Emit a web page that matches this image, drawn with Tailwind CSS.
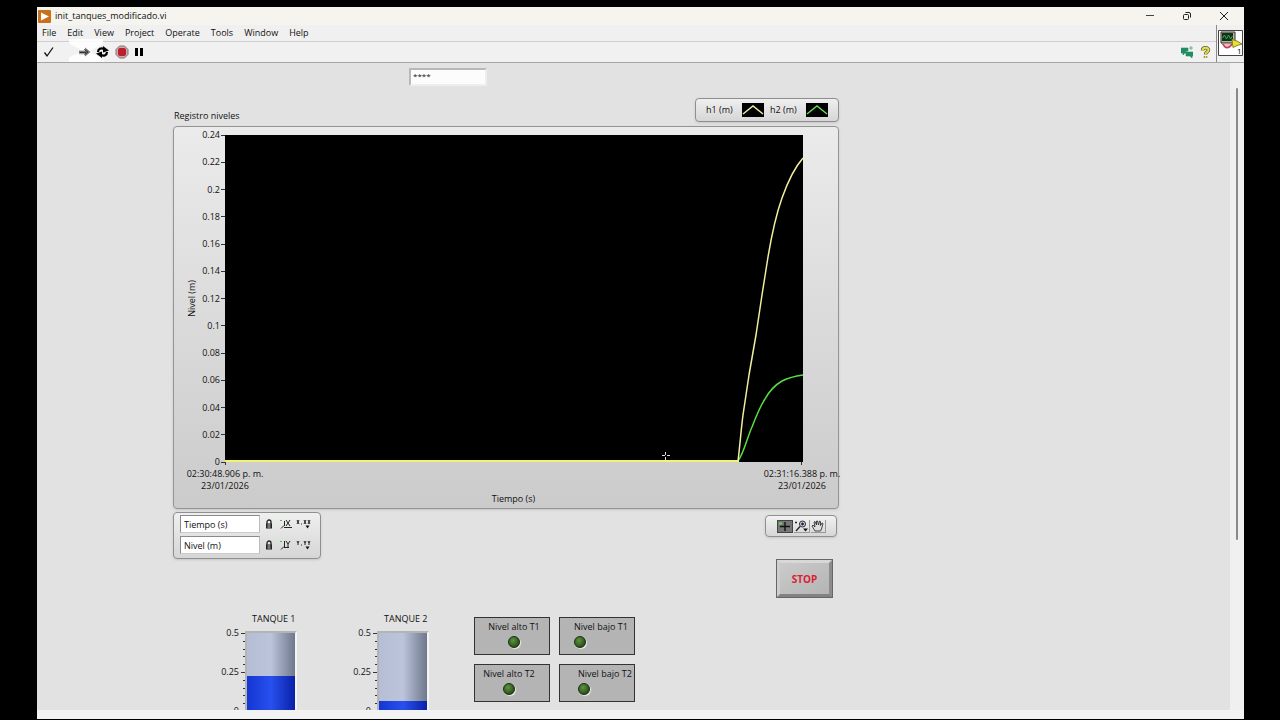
<!DOCTYPE html>
<html lang="es">
<head>
  <meta charset="UTF-8" />
  <meta name="viewport" content="width=device-width, initial-scale=1.0"/>
  <title>init_tanques_modificado.vi</title>
  <script src="https://cdn.jsdelivr.net/npm/@tailwindcss/browser@4"></script>
</head>
<body class="bg-black h-screen pt-[7px] pb-px pl-[37px] pr-9 font-['Open_Sans',sans-serif] text-[9px] leading-3 text-[#111]">
  <div class="h-full flex flex-col bg-[#f0f0f0] overflow-hidden">

    <!-- title bar -->
    <header class="h-[18px] shrink-0 flex items-center bg-[#f5f4ef] pl-px">
      <svg class="size-[13px]" viewBox="0 0 13 13"><rect width="13" height="13" rx="1" fill="#c9701c"/><path d="M3 2.5 11 6.5 3 10.5Z" fill="#fff"/></svg>
      <h1 class="ml-1 flex-1">init_tanques_modificado.vi</h1>
      <div class="flex items-center gap-[25px] mr-[14px]">
        <button aria-label="Minimize"><svg class="size-3" viewBox="0 0 12 12"><path d="M2 5.5h8" stroke="#444" fill="none"/></svg></button>
        <button aria-label="Restore"><svg class="size-3" viewBox="0 0 12 12"><path d="M4.500 2.500h3.500a1.500 1.500 0 0 1 1.500 1.500v3.500M3.500 4.500h3a1 1 0 0 1 1 1v3a1 1 0 0 1-1 1h-3a1 1 0 0 1-1-1v-3a1 1 0 0 1 1-1Z" stroke="#222" fill="none"/></svg></button>
        <button aria-label="Close"><svg class="size-3" viewBox="0 0 12 12"><path d="m2 2 8 8M10 2 2 10" stroke="#222" fill="none"/></svg></button>
      </div>
    </header>

    <!-- menu and toolbar -->
    <div class="shrink-0 flex border-b border-[#a4a6a6]">
      <div class="flex-1">
        <nav class="h-[17px] flex items-center gap-[11px] pl-[5px] border-b border-[#cfcfcf]">
          <button>File</button>
          <button>Edit</button>
          <button>View</button>
          <button>Project</button>
          <button>Operate</button>
          <button>Tools</button>
          <button>Window</button>
          <button>Help</button>
        </nav>
        <div class="relative h-5 flex items-center bg-[#f1f1f1] pl-[6px] pr-[5px]">
          <button aria-label="Check"><svg class="size-3" viewBox="0 0 12 12"><path d="m1.500 6.500 2.500 3.500L10 1.500" stroke="#111" stroke-width="1.300" fill="none"/></svg></button>
          <svg class="absolute left-[30px] -top-[4px] w-10 h-[25px]" viewBox="0 0 40 25"><path d="M2 1h34v4c-4 5-12 5-12 8s8 4 14 11H2v-4c3-4 12-4 12-7S6 9 2 5Z" fill="#fff" opacity=".85"/></svg>
          <button aria-label="Run" class="relative ml-[23px]"><svg class="w-[13px] h-3" viewBox="0 0 13 12"><path d="M1 4h6V1.500L12.500 6 7 10.500V8H1Z" fill="#777"/><path d="M6 3.500 10 6 6 9M2 6.500h6" stroke="#333" fill="none"/><path d="M1 4.500h6M1 8h6" stroke="#ccc"/></svg></button>
          <button aria-label="Run continuously" class="relative ml-[5px]"><svg class="w-[13px] h-3" viewBox="0 0 13 12"><path d="M2 6C2 3 5 1.500 8 3M11 6c0 3-3 4.500-6 3" stroke="#000" stroke-width="2.200" fill="none"/><path d="M7 0 13 4.500 7 6.500ZM6 12 0 7.500 6 5.500Z" fill="#000"/></svg></button>
          <button aria-label="Abort" class="ml-[6px]"><svg class="size-[14px]" viewBox="0 0 14 14"><path d="M4.500 1h5L13 4.500v5L9.500 13h-5L1 9.500v-5Z" fill="#d8a8a8" stroke="#777"/><rect x="3" y="3" width="8" height="8" rx="2" fill="#b9202e"/></svg></button>
          <button aria-label="Pause" class="ml-[4px]"><svg class="size-3" viewBox="0 0 12 12"><path d="M2 2h3v8H2zM7 2h3v8H7z" fill="#000"/></svg></button>
          <span class="flex-1"></span>
          <button aria-label="Collaborate"><svg class="size-3" viewBox="0 0 12 12"><path d="M0 2h7v3H5v2H4L2 9V7H0ZM5 6h7v4h-1v2L9 10H5ZM10 0v4M8 2h4" fill="#1f8f63" stroke="#1f8f63" stroke-width=".6"/></svg></button>
          <button aria-label="Context help" class="ml-[7px]"><svg class="w-[11px] h-[13px]" viewBox="0 0 11 13"><path d="M2.500 4.500C2.500 1 8.500 1 8.500 4c0 2-3 2-3 4.500M5.500 10v2" stroke="#555" stroke-width="3.400" fill="none"/><path d="M2.500 4.500C2.500 1 8.500 1 8.500 4c0 2-3 2-3 4.500M5.500 10v2" stroke="#ece52c" stroke-width="2" fill="none"/></svg></button>
        </div>
      </div>
      <div class="w-7 border-l border-[#8a8a8a] pt-[5px] pl-px">
        <svg class="w-[25px] h-[26px]" viewBox="0 0 25 26"><path d="M.5.500h24v25H.5Z" fill="#fff" stroke="#444"/><path d="M3 2h14v11H3Z" fill="#bdb5a0" stroke="#333"/><path d="M4 3h11v8H4Z" fill="#12301a"/><path d="M4.500 8l2-3 2 4 2-4 2 4 2-3" stroke="#2fae4a" fill="none"/><path d="M3 13h12l-2 2H5Z" fill="#b9a98a" stroke="#555" stroke-width=".5"/><path d="M5 14c2 5 6 5 9 0" stroke="#c0405a" stroke-width="1.500" fill="#f3b7c3"/><path d="M14 9.500 19 11l5 3-5 1.500-4 2Z" fill="#e9df38" stroke="#8b8420"/><text x="19" y="24" font-size="8" fill="#000">1</text></svg>
      </div>
    </div>

    <!-- front panel -->
    <div class="flex-1 min-h-0 flex">
      <main class="flex-1 overflow-hidden bg-[#e2e2e2]">
        <input type="text" aria-label="Clave" value="****" class="block mt-[5px] ml-[372px] w-[78px] h-[18px] bg-[#fcfcfc] border-2 border-t-[#b8b8b8] border-l-[#b8b8b8] border-r-[#eee] border-b-[#eee] pl-0.5 pb-1 text-[8px]">

        <section class="ml-[136px] mt-3 w-[666px]">
          <div class="flex justify-between items-end">
            <h2 class="pl-px">Registro niveles</h2>
            <div class="flex items-center h-6 w-[144px] pl-[10px] rounded border border-[#8f8f8f] bg-linear-to-b from-[#efefef] to-[#d6d6d6] shadow">
              <span class="w-9">h1 (m)</span>
              <svg class="w-[22px] h-[14px] bg-black" viewBox="0 0 22 14"><path d="M1 11 11 3l10 8" stroke="#f0eea0" stroke-width="1.500" fill="none"/></svg>
              <span class="w-9 ml-[6px]">h2 (m)</span>
              <svg class="w-[22px] h-[14px] bg-black" viewBox="0 0 22 14"><path d="M1 11 11 3l10 8" stroke="#5fe04c" stroke-width="1.500" fill="none"/></svg>
            </div>
          </div>

          <!-- chart -->
          <div class="mt-1 h-[383px] rounded border border-[#949494] bg-linear-to-b from-[#ebebeb] to-[#cbcbcb] pt-2 shadow">
            <div class="flex h-[327px]">
              <div class="w-6 flex items-center justify-end"><span class="[writing-mode:vertical-rl] rotate-180">Nivel (m)</span></div>
              <div id="ticks" class="w-[27px] -my-[6px] flex flex-col justify-between"></div>
              <svg class="w-[578px] h-[327px] bg-black" viewBox="0 0 578 327">
                <path d="M513 326C519 318 522 303 527 292C532 279 536 270 540 264C545 255 550 250 557 246C563 243 571 241 578 240" stroke="#55e040" stroke-width="1.500" fill="none"/>
                <path d="M513 326C515 310 516 295 518 280L524 240L531 200L537 160L543 122C547 98 551 80 557 63C563 46 570 32 578 23" stroke="#efeea0" stroke-width="1.500" fill="none" stroke-linejoin="round"/>
                <path d="M0 326H514" stroke="#f4f26a" stroke-width="2"/>
                <path d="M440.500 317v3M440.500 322v3M437 320.500h3M442 320.500h3" stroke="#ddd" fill="none"/>
              </svg>
            </div>
            <div class="flex justify-between pl-[11px] text-center">
              <div class="w-20"><div class="mx-auto w-px h-[3px] bg-[#333]"></div><p class="pt-[3px] whitespace-nowrap">02:30:48.906 p. m.<br>23/01/2026</p></div>
              <p class="self-end -mb-[13px]">Tiempo (s)</p>
              <div class="w-20 -mr-1"><div class="mx-auto w-px h-[3px] bg-[#333]"></div><p class="pt-[3px] whitespace-nowrap">02:31:16.388 p. m.<br>23/01/2026</p></div>
            </div>
          </div>

          <div class="flex justify-between mt-[3px]">
            <!-- scale legend -->
            <div class="h-[47px] w-[148px] flex flex-col gap-[3px] rounded border border-[#8f8f8f] bg-linear-to-b from-[#efefef] to-[#d6d6d6] pt-[2px] pl-[6px] shadow">
              <div class="flex items-center">
                <input aria-label="Escala X" value="Tiempo (s)" class="w-20 h-[18px] pl-[3px] bg-white border border-[#8a8a8a] border-b-[#ccc] border-r-[#bbb]">
                <button aria-label="Bloquear X" class="ml-1"><svg class="size-[10px]" viewBox="0 0 10 10"><path d="M3 5V3a2 2 0 0 1 4 0v2" stroke="#222" stroke-width="1.300" fill="none"/><path d="M2 4.500h6V9.500H2Z" fill="#222"/><path d="M3.500 6h3M3.500 8h3" stroke="#ccc"/></svg></button>
                <button aria-label="Autoescala X" class="ml-[6px]"><svg class="w-3 h-[10px]" viewBox="0 0 12 10"><path d="M0 1.500h2" stroke="#45c83c"/><path d="M4.500 2v5M1 9.500l3-3M4 8.500h8M6 1l4 6M10 1 6 7" stroke="#222" fill="none"/></svg></button>
                <button aria-label="Formato X" class="ml-[4px]"><svg class="w-4 h-[10px]" viewBox="0 0 16 10"><path d="M1 1l2 4M3 1 1 5M5 5h1M8 1l2 4M10 1 8 5M12 1l2 4M14 1l-2 4" stroke="#222" fill="none"/><path d="M9.500 6.500h4l-2 3Z" fill="#111"/></svg></button>
              </div>
              <div class="flex items-center">
                <input aria-label="Escala Y" value="Nivel (m)" class="w-20 h-[18px] pl-[3px] bg-white border border-[#8a8a8a] border-b-[#ccc] border-r-[#bbb]">
                <button aria-label="Bloquear Y" class="ml-1"><svg class="size-[10px]" viewBox="0 0 10 10"><path d="M3 5V3a2 2 0 0 1 4 0v2" stroke="#222" stroke-width="1.300" fill="none"/><path d="M2 4.500h6V9.500H2Z" fill="#222"/><path d="M3.500 6h3M3.500 8h3" stroke="#ccc"/></svg></button>
                <button aria-label="Autoescala Y" class="ml-[6px]"><svg class="w-3 h-[10px]" viewBox="0 0 12 10"><path d="M0 1.500h2" stroke="#45c83c"/><path d="M4.500 1v6M1 9.500l3-3M4 7.500h5M6 1l2 3M10 1 8 4v4" stroke="#222" fill="none"/></svg></button>
                <button aria-label="Formato Y" class="ml-[4px]"><svg class="w-4 h-[10px]" viewBox="0 0 16 10"><path d="M1 1l1 2 1-2M2 3v2M5 5h1M8 1l1 2 1-2M9 3v2M12 1l1 2 1-2M13 3v2" stroke="#222" fill="none"/><path d="M9.500 6.500h4l-2 3Z" fill="#111"/></svg></button>
              </div>
            </div>

            <!-- graph palette and stop -->
            <div class="pt-[3px] pr-[2px] flex flex-col items-end">
              <div class="flex items-center gap-px h-[22px] w-[72px] pl-[11px] rounded border border-[#8f8f8f] bg-linear-to-b from-[#f2f2f2] to-[#d6d6d6] shadow">
                <button aria-label="Cursor" class="bg-[#777] border border-[#444]"><svg class="w-[14px] h-[11px]" viewBox="0 0 14 11"><path d="M7 1v9M2 5.500h10" stroke="#111" stroke-width="1.400"/><path d="M1 2.500h3" stroke="#5fe04c" stroke-width="2"/></svg></button>
                <button aria-label="Zoom" class="border-r border-b border-[#999]"><svg class="w-[15px] h-3" viewBox="0 0 15 12"><circle cx="8.500" cy="4" r="3" fill="#dde" stroke="#223"/><path d="M6 6.500 2 11M7 4h3M8.500 2.500v3M1 2.500h2" stroke="#223" stroke-width="1.300"/><path d="M9 8.500h5l-2.500 3Z" fill="#111"/></svg></button>
                <button aria-label="Mover" class="border-r border-b border-[#999]"><svg class="w-[14px] h-3" viewBox="0 0 14 12"><path d="M4 11 1 6l1-1 2 2L3 2l1-.5L5.500 5 5.500 1h1L7.500 5 8.500 1l1 .5L9.500 5.500 11 3l1 .5L10.500 9 9.500 11Z" fill="#ddd" stroke="#222" stroke-width=".8"/></svg></button>
              </div>
              <button class="mt-[22px] mr-1 w-[57px] h-[39px] border border-[#666] bg-[#bebebe] text-[10px] text-[#dc1c34] font-bold"><span class="flex h-full items-center justify-center border-3 border-t-[#d8d8d8] border-l-[#cecece] border-r-[#8c8c8c] border-b-[#828282] bg-linear-to-br from-[#cbcbcb] to-[#b4b4b4]">STOP</span></button>
            </div>
          </div>
        </section>

        <!-- tanks and alarms -->
        <section class="ml-[180px] mt-[15px] flex items-start">
          <div class="w-[132px]">
            <h3 class="pl-[35px] h-[18px]">TANQUE 1</h3>
            <div class="flex">
              <div class="w-[22px] h-[90px] -mt-[4px] flex flex-col justify-between text-right">
                <span>0.5</span><span>0.25</span><span>0</span>
              </div>
              <svg class="w-[6px] h-[82px] shrink-0" viewBox="0 0 6 82"><path d="M2 2.500h4M4 10.500h2M4 18.500h2M4 25.500h2M4 33.500h2M2 41.500h4M4 49.500h2M4 57.500h2M4 64.500h2M4 72.500h2" stroke="#333"/></svg>
              <div class="w-[52px] h-[90px] border-2 border-[#b4b4b4] border-r-[#f4f4f4] flex flex-col justify-end bg-linear-to-r from-[#b6bed6] via-[#bcc4dc] via-50% to-[#6f788c]">
                <div class="h-[43px] bg-linear-to-r from-[#1436d2] via-[#2850ee] via-50% to-[#0a20a8]"></div>
              </div>
            </div>
          </div>
          <div class="w-[125px]">
            <h3 class="pl-[35px] h-[18px]">TANQUE 2</h3>
            <div class="flex">
              <div class="w-[22px] h-[90px] -mt-[4px] flex flex-col justify-between text-right">
                <span>0.5</span><span>0.25</span><span>0</span>
              </div>
              <svg class="w-[6px] h-[82px] shrink-0" viewBox="0 0 6 82"><path d="M2 2.500h4M4 10.500h2M4 18.500h2M4 25.500h2M4 33.500h2M2 41.500h4M4 49.500h2M4 57.500h2M4 64.500h2M4 72.500h2" stroke="#333"/></svg>
              <div class="w-[52px] h-[90px] border-2 border-[#b4b4b4] border-r-[#f4f4f4] flex flex-col justify-end bg-linear-to-r from-[#b6bed6] via-[#bcc4dc] via-50% to-[#6f788c]">
                <div class="h-[18px] bg-linear-to-r from-[#1436d2] via-[#2850ee] via-50% to-[#0a20a8]"></div>
              </div>
            </div>
          </div>
          <div class="mt-1 grid grid-cols-[76px_76px] gap-[9px] whitespace-nowrap">
            <div class="h-[38px] border border-[#333] bg-[#b4b4b4] flex flex-col items-center gap-[3px] pt-[3px] pl-1">
              <span>Nivel alto T1</span>
              <i class="size-3 rounded-full border border-[#1c2c14] bg-radial-[at_40%_35%] from-[#5e9440] to-[#16380e] shadow-[1px_1px_1px_#e8f0e0]"></i>
            </div>
            <div class="h-[38px] border border-[#333] bg-[#b4b4b4] flex flex-col gap-[3px] pt-[3px] pl-[14px]">
              <span>Nivel bajo T1</span>
              <i class="size-3 rounded-full border border-[#1c2c14] bg-radial-[at_40%_35%] from-[#5e9440] to-[#16380e] shadow-[1px_1px_1px_#e8f0e0]"></i>
            </div>
            <div class="h-[38px] border border-[#333] bg-[#b4b4b4] flex flex-col items-center gap-[3px] pt-[3px] pr-[6px]">
              <span>Nivel alto T2</span>
              <i class="size-3 rounded-full border border-[#1c2c14] bg-radial-[at_40%_35%] from-[#5e9440] to-[#16380e] shadow-[1px_1px_1px_#e8f0e0]"></i>
            </div>
            <div class="h-[38px] border border-[#333] bg-[#b4b4b4] flex flex-col gap-[3px] pt-[3px] pl-[18px]">
              <span>Nivel bajo T2</span>
              <i class="size-3 rounded-full border border-[#1c2c14] bg-radial-[at_40%_35%] from-[#5e9440] to-[#16380e] shadow-[1px_1px_1px_#e8f0e0]"></i>
            </div>
          </div>
        </section>
      </main>
      <!-- vertical scrollbar -->
      <div class="w-[14px] pt-[25px] flex justify-center"><div class="w-[2px] h-[452px] rounded bg-[#8a8a8a]"></div></div>
    </div>
    <div class="h-[9px] shrink-0 bg-[#f3f3f3]"></div>
  </div>

  <script>
    // y axis, 0.24 down to 0
    const ticks = document.getElementById('ticks');
    for (let i = 12; i >= 0; i--) {
      ticks.innerHTML += `<div class="flex items-center justify-end gap-px h-3"><span>${+(i * 0.02).toFixed(2)}</span><span class="w-1 h-px bg-[#333]"></span></div>`;
    }
  </script>
</body>
</html>
